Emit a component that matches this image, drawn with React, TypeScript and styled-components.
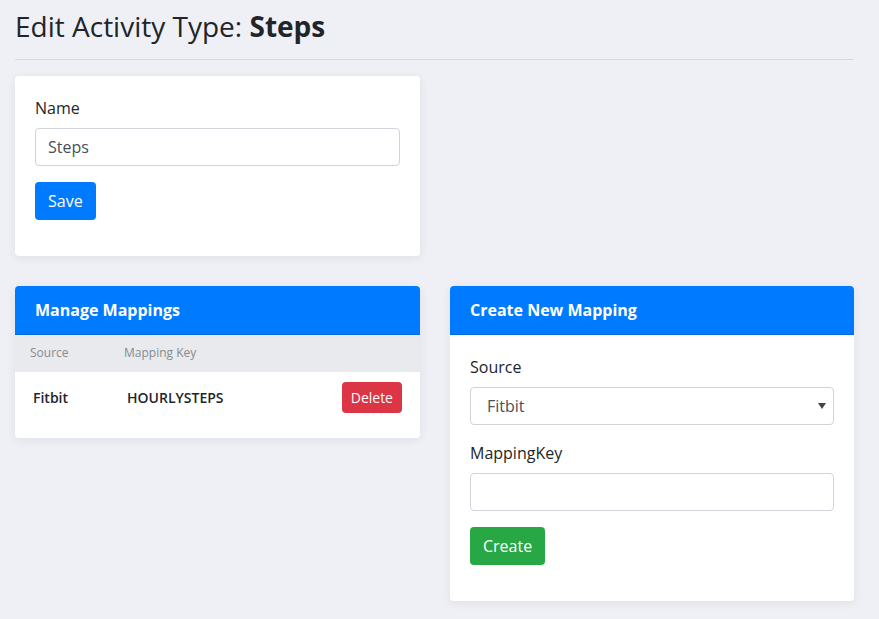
import React from "react";
import styled, { createGlobalStyle } from "styled-components";

const GlobalStyle = createGlobalStyle`
  html, body { margin: 0; padding: 0; }
  body {
    background: #eff0f5;
    font-family: "Open Sans", "Liberation Sans", sans-serif;
    color: #212529;
    font-size: 16px;
    line-height: 1.5;
  }
  * { box-sizing: border-box; }
`;

const Page = styled.div`
  padding: 0 25px 18px 15px;
`;

const Title = styled.h1`
  margin: 0;
  padding-top: 10px;
  font-size: 28px;
  font-weight: 400;
  line-height: 1.2;
  color: #212529;
  b { font-weight: 700; }
`;

const Rule = styled.hr`
  margin: 15px 0 16px 0;
  border: 0;
  border-top: 1px solid #d6d8de;
`;

const Grid = styled.div`
  display: grid;
  grid-template-columns: 405px 404px;
  column-gap: 30px;
  row-gap: 30px;
  align-items: start;
`;

const Card = styled.div`
  background: #fff;
  border-radius: 4px;
  box-shadow: 0 2px 10px rgba(40, 50, 90, 0.08);
  overflow: hidden;
`;

const CardHeader = styled.div`
  background: #007bff;
  color: #fff;
  font-weight: 700;
  font-size: 16px;
  height: 49px;
  display: flex;
  align-items: center;
  padding: 0 20px;
  border-bottom: 1px solid #0069d9;
`;

const CardBody = styled.div`
  padding: 20px;
`;

const FormGroup = styled.div`
  margin-bottom: 16px;
`;

const Label = styled.label`
  display: block;
  margin-bottom: 8px;
  font-size: 16px;
  line-height: 24px;
  color: #212529;
`;

const Input = styled.input`
  display: block;
  width: 100%;
  height: 38px;
  padding: 6px 12px;
  font-family: inherit;
  font-size: 16px;
  color: #495057;
  background: #fff;
  border: 1px solid #ced4da;
  border-radius: 4px;
  outline: none;
`;

const SelectWrap = styled.div`
  position: relative;
`;

const Select = styled.select`
  display: block;
  width: 100%;
  height: 38px;
  padding: 6px 16px;
  font-family: inherit;
  font-size: 16px;
  color: #495057;
  background: #fff;
  border: 1px solid #ced4da;
  border-radius: 4px;
  appearance: none;
  -webkit-appearance: none;
  outline: none;
`;

const Caret = styled.svg`
  position: absolute;
  right: 8px;
  top: 16px;
  pointer-events: none;
`;

const Button = styled.button<{ $variant: "primary" | "success" | "danger"; $small?: boolean }>`
  display: inline-flex;
  align-items: center;
  justify-content: center;
  font-family: inherit;
  color: #fff;
  border: 1px solid transparent;
  border-radius: 4px;
  cursor: pointer;
  background: ${(p) =>
    p.$variant === "primary" ? "#007bff" : p.$variant === "success" ? "#28a745" : "#dc3545"};
  height: ${(p) => (p.$small ? "31px" : "38px")};
  padding: ${(p) => (p.$small ? "0 8px" : "0 12px")};
  font-size: ${(p) => (p.$small ? "14px" : "16px")};
`;

const Table = styled.table`
  width: 100%;
  border-collapse: collapse;
`;

const Th = styled.th`
  background: #e9eaee;
  color: #858a91;
  font-weight: 400;
  font-size: 12px;
  text-align: left;
  height: 37px;
  padding: 0 15px;
  &:first-child { width: 94px; }
`;

const Td = styled.td<{ $right?: boolean }>`
  font-size: 14px;
  font-weight: 600;
  color: #212529;
  padding: 10px 18px;
  text-align: ${(p) => (p.$right ? "right" : "left")};
  vertical-align: middle;
  &:nth-child(2) { padding-left: 18px; }
`;

const TableFoot = styled.div`
  height: 15px;
`;

export default function App() {
  return (
    <>
      <GlobalStyle />
      <Page>
        <Title>
          Edit Activity Type: <b>Steps</b>
        </Title>
        <Rule />
        <Grid>
          <Card>
            <CardBody>
              <FormGroup>
                <Label>Name</Label>
                <Input defaultValue="Steps" />
              </FormGroup>
              <FormGroup>
                <Button $variant="primary">Save</Button>
              </FormGroup>
            </CardBody>
          </Card>
          <div />
          <Card>
            <CardHeader>Manage Mappings</CardHeader>
            <Table>
              <thead>
                <tr>
                  <Th>Source</Th>
                  <Th>Mapping Key</Th>
                  <Th />
                </tr>
              </thead>
              <tbody>
                <tr>
                  <Td>Fitbit</Td>
                  <Td>HOURLYSTEPS</Td>
                  <Td $right>
                    <Button $variant="danger" $small>
                      Delete
                    </Button>
                  </Td>
                </tr>
              </tbody>
            </Table>
            <TableFoot />
          </Card>
          <Card>
            <CardHeader>Create New Mapping</CardHeader>
            <CardBody>
              <FormGroup>
                <Label>Source</Label>
                <SelectWrap>
                  <Select defaultValue="Fitbit">
                    <option>Fitbit</option>
                  </Select>
                  <Caret width="8" height="6" viewBox="0 0 8 6">
                    <path d="M0 0 H8 L4 6 Z" fill="#444" />
                  </Caret>
                </SelectWrap>
              </FormGroup>
              <FormGroup>
                <Label>MappingKey</Label>
                <Input />
              </FormGroup>
              <FormGroup>
                <Button $variant="success">Create</Button>
              </FormGroup>
            </CardBody>
          </Card>
        </Grid>
      </Page>
    </>
  );
}
